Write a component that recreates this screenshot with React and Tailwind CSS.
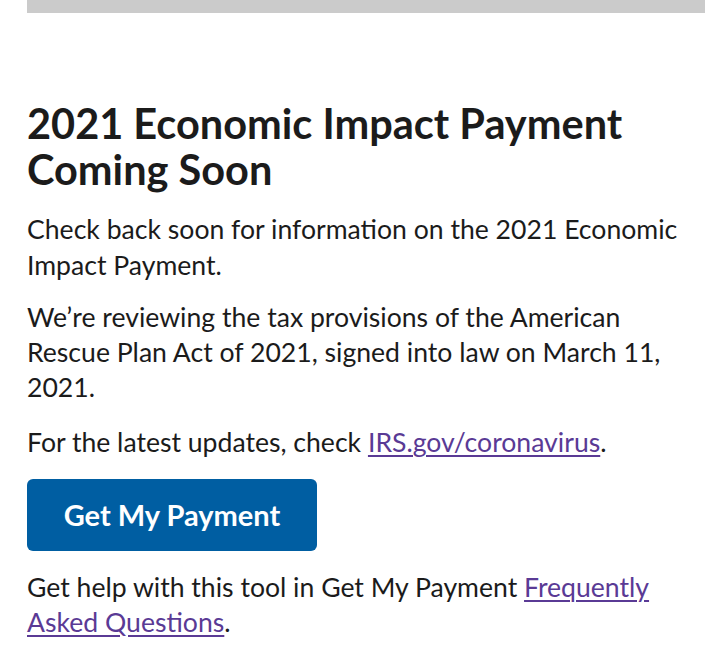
import React from 'react';

const Link = ({ children }) => (
  <a href="#" className="text-[#5a3a95] underline decoration-[1.5px] underline-offset-[3px]">
    {children}
  </a>
);

export default function App() {
  return (
    <div
      className="min-h-screen bg-white text-[#1b1b1b]"
      style={{ fontFamily: "Lato, 'Noto Sans', sans-serif" }}
    >
      <div className="ml-[27px] mr-[15px] h-[13px] bg-[#cbcbcb]" />
      <div className="px-[27px] pt-[87px]">
        <h1 className="text-[41.5px] font-bold leading-[46px]">
          2021 Economic Impact Payment Coming Soon
        </h1>
        <p className="mt-[19px] text-[26.6px] leading-[36px]">
          Check back soon for information on the 2021 Economic Impact Payment.
        </p>
        <p className="mt-[17px] text-[26.6px] leading-[35px]">
          We’re reviewing the tax provisions of the American Rescue Plan Act of 2021, signed into law on March 11, 2021.
        </p>
        <p className="mt-[19px] text-[26.6px] leading-[36px]">
          For the latest updates, check <Link>IRS.gov/coronavirus</Link>.
        </p>
        <button className="mt-[19px] flex h-[72px] w-[290px] items-center justify-center rounded-[6px] bg-[#005ea2] text-[29px] font-bold text-white">
          Get My Payment
        </button>
        <p className="mt-[19px] text-[26.6px] leading-[35px]">
          Get help with this tool in Get My Payment <Link>Frequently Asked Questions</Link>.
        </p>
      </div>
    </div>
  );
}
